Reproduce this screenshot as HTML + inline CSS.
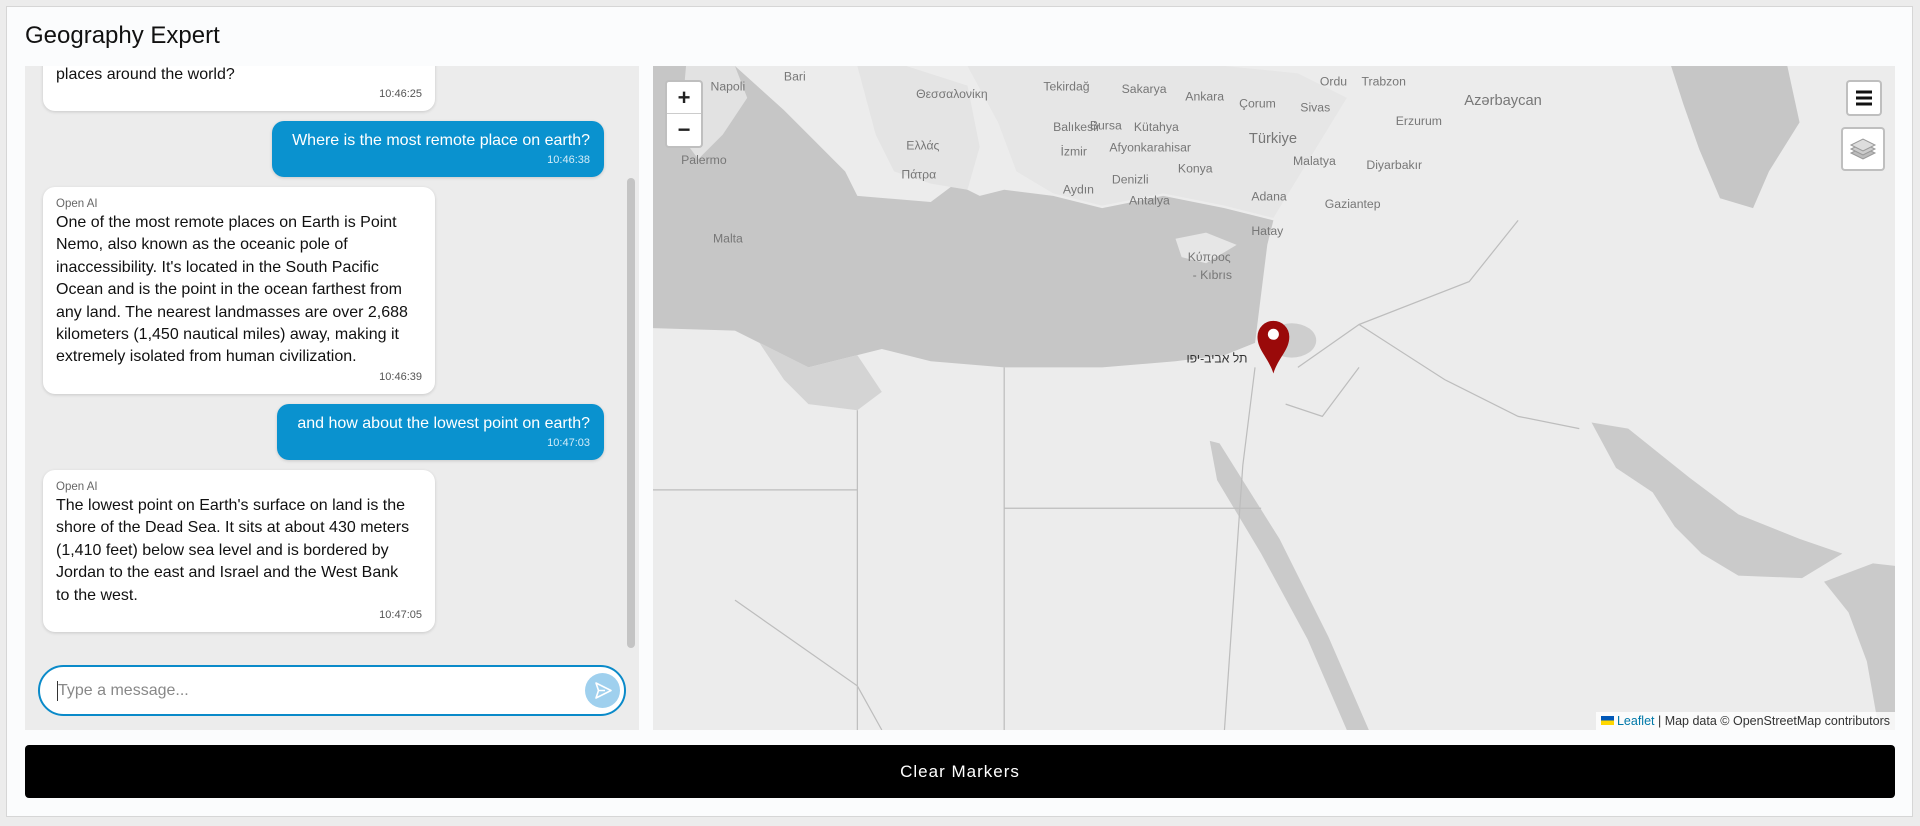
<!DOCTYPE html>
<html><head><meta charset="utf-8"><style>
*{box-sizing:border-box;margin:0;padding:0}
body{width:1920px;height:826px;background:#ececec;font-family:"Liberation Sans","Noto Sans CJK SC",sans-serif;position:relative;overflow:hidden}
.card{position:absolute;left:6px;top:6px;width:1907px;height:811px;background:#fbfcfd;border:1px solid #d6d6d6}
.title{position:absolute;left:25px;top:22px;font-size:24px;color:#111}
.chat{position:absolute;left:25px;top:66px;width:614px;height:664px;background:#ececec;overflow:hidden}
.b{position:absolute;border-radius:12px;padding:9px 13px;box-shadow:0 1px 3px rgba(0,0,0,.15)}
.ai{left:18px;width:392px;background:#fff;color:#111}
.us{right:35px;background:#0a92cf;color:#fff;text-align:right;padding:9px 14px}
.lb{font-size:11.5px;color:#666;line-height:16px}
.tx{font-size:16px;line-height:22.4px}
.ts{font-size:11px;line-height:16px;text-align:right;color:#555}
.us .ts{color:#d4ecf8}
.sb{position:absolute;left:602px;top:112px;width:8px;height:470px;background:#c4c4c4;border-radius:4px}
.inp{position:absolute;left:13px;top:599px;width:588px;height:51px;border:2px solid #0a8ac9;border-radius:26px;background:#fff}
.inp span{position:absolute;left:18px;top:15px;font-size:16px;color:#888}
.inp i{position:absolute;left:17px;top:14px;width:1px;height:20px;background:#333}
.send{position:absolute;right:4px;top:6px;width:35px;height:35px;border-radius:50%;background:#9fd0ee}
.map{position:absolute;left:653px;top:66px;width:1242px;height:664px;overflow:hidden;background:#ececec}
.ctl{position:absolute;background:#fff;border:2px solid rgba(0,0,0,.25);border-radius:4px}
.zb{width:34px;height:32px;text-align:center;font:bold 22px/32px "Liberation Sans",sans-serif;color:#222}
.attr{position:absolute;right:0;bottom:0;background:rgba(255,255,255,.8);font-size:12.5px;padding:2px 5px;color:#333}
.attr a{color:#0078a8;text-decoration:none}
.btn{position:absolute;left:25px;top:745px;width:1870px;height:53px;background:#000;border-radius:4px;color:#fff;font-size:17px;letter-spacing:1px;text-align:center;line-height:53px}
</style></head><body>
<div class="card"></div>
<div class="title">Geography Expert</div>
<div class="chat">
 <div class="b ai" style="top:-40px;padding-top:38px"><div class="tx">places around the world?</div><div class="ts">10:46:25</div></div>
 <div class="b us" style="top:55px;width:332px"><div class="tx">Where is the most remote place on earth?</div><div class="ts">10:46:38</div></div>
 <div class="b ai" style="top:121px"><div class="lb">Open AI</div><div class="tx">One of the most remote places on Earth is Point<br>Nemo, also known as the oceanic pole of<br>inaccessibility. It's located in the South Pacific<br>Ocean and is the point in the ocean farthest from<br>any land. The nearest landmasses are over 2,688<br>kilometers (1,450 nautical miles) away, making it<br>extremely isolated from human civilization.</div><div class="ts">10:46:39</div></div>
 <div class="b us" style="top:338px;width:327px"><div class="tx">and how about the lowest point on earth?</div><div class="ts">10:47:03</div></div>
 <div class="b ai" style="top:404px"><div class="lb">Open AI</div><div class="tx">The lowest point on Earth's surface on land is the<br>shore of the Dead Sea. It sits at about 430 meters<br>(1,410 feet) below sea level and is bordered by<br>Jordan to the east and Israel and the West Bank<br>to the west.</div><div class="ts">10:47:05</div></div>
 <div class="sb"></div>
 <div class="inp"><i></i><span>Type a message...</span><div class="send"><svg width="35" height="35" viewBox="0 0 35 35"><path d="M11 10 L26 17.5 L11 25 L13.5 17.5 Z M13.5 17.5 H20" fill="none" stroke="#fff" stroke-width="1.6" stroke-linejoin="round"/></svg></div></div>
</div>
<div class="map">
<svg width="1242" height="664" viewBox="533 54 1015 542" preserveAspectRatio="none" style="position:absolute;left:0;top:0">
 <rect x="533" y="54" width="1015" height="542" fill="#ececec"/>
 <path d="M533,54 L600,54 L640,90 L660,110 L690,140 L700,160 L760,165 L780,150 L800,160 L820,155 L860,160 L900,170 L950,160 L1000,170 L1040,180 L1035,200 L1030,240 L1025,280 L1000,290 L960,295 L900,300 L820,300 L760,295 L720,285 L700,290 L660,300 L620,280 L600,270 L533,268 Z" fill="#c6c6c6"/>
 <path d="M560,54 L600,54 L610,80 L590,110 L570,130 L555,110 Z" fill="#e2e2e2"/>
 <path d="M700,54 L740,54 L790,70 L800,120 L790,155 L760,150 L730,140 L715,110 Z" fill="#e4e4e4"/>
 <path d="M790,54 L1000,54 L1060,60 L1100,80 L1040,178 L1000,168 L950,158 L900,168 L860,158 L830,140 L815,100 Z" fill="#e6e6e6"/>
 <path d="M960,195 L985,190 L1010,200 L985,215 L965,210 Z" fill="#e6e6e6"/>
 <path d="M620,280 L660,300 L700,290 L720,320 L700,335 L660,330 L640,310 Z" fill="#d4d4d4"/>
 <path d="M1365,54 L1460,54 L1470,100 L1445,140 L1432,170 L1405,162 L1388,122 L1375,85 Z" fill="#c6c6c6"/>
 <path d="M988,360 L996,362 L1045,440 L1085,520 L1118,596 L1100,596 L1068,522 L1030,452 L994,392 Z" fill="#cacaca"/>
 <path d="M1300,345 L1330,350 L1380,390 L1420,420 L1470,440 L1505,452 L1472,472 L1420,470 L1390,452 L1368,430 L1350,402 L1320,382 Z" fill="#cacaca"/>
 <path d="M1490,475 L1530,460 L1548,462 L1548,596 L1535,596 L1525,540 L1510,500 Z" fill="#cacaca"/>
 <g fill="none" stroke="#bdbdbd" stroke-width="1">
  <path d="M820,300 L820,596 M700,335 L700,596 M820,415 L1030,415 M1025,300 L1015,380 L1000,596 M1060,300 L1110,265 L1180,310 L1240,340 L1290,350 M1110,265 L1200,230 L1240,180 M1050,330 L1080,340 L1110,300 M600,490 L700,560 L720,596 M533,400 L700,400"/>
 </g>
 <g font-size="10" fill="#777" font-family="Liberation Sans,sans-serif">
  <text x="580" y="74">Napoli</text><text x="640" y="66">Bari</text><text x="556" y="134">Palermo</text><text x="582" y="198">Malta</text>
  <text x="748" y="80">Θεσσαλονίκη</text><text x="740" y="122">Ελλάς</text><text x="736" y="146">Πάτρα</text>
  <text x="852" y="74">Tekirdağ</text><text x="916" y="76">Sakarya</text><text x="968" y="82">Ankara</text><text x="1012" y="88">Çorum</text>
  <text x="1062" y="91">Sivas</text><text x="1078" y="70">Ordu</text><text x="1112" y="70">Trabzon</text><text x="1140" y="102">Erzurum</text>
  <text x="1020" y="117" font-size="12">Türkiye</text><text x="1196" y="86" font-size="12">Azərbaycan</text>
  <text x="890" y="106">Bursa</text><text x="860" y="107">Balıkesir</text><text x="926" y="107">Kütahya</text><text x="866" y="127">İzmir</text>
  <text x="906" y="124">Afyonkarahisar</text><text x="962" y="141">Konya</text><text x="1056" y="135">Malatya</text><text x="1116" y="138">Diyarbakır</text>
  <text x="868" y="158">Aydın</text><text x="908" y="150">Denizli</text><text x="922" y="167">Antalya</text><text x="1022" y="164">Adana</text>
  <text x="1082" y="170">Gaziantep</text><text x="1022" y="192">Hatay</text><text x="970" y="213">Κύπρος</text><text x="974" y="228">- Kıbrıs</text>
 </g>
 <g fill="#333" font-family="Liberation Sans,sans-serif" font-size="10"><text x="969" y="296">תל אביב-יפו</text></g>
 <ellipse cx="1055" cy="278" rx="20" ry="14" fill="#999" opacity=".35"/>
 <path d="M1040,305 C1036,292 1027,286 1027,275 A13,13 0 0 1 1053,275 C1053,286 1044,292 1040,305 Z" fill="#9a0a0a"/>
 <circle cx="1040" cy="273" r="4.5" fill="#fff"/>
</svg>
<div class="ctl" style="left:12px;top:14px;width:38px"><div class="zb" style="border-bottom:1px solid #ccc">+</div><div class="zb">−</div></div>
<div class="ctl" style="left:1193px;top:14px;width:36px;height:36px"><svg width="32" height="32" viewBox="0 0 32 32"><path d="M8 10H24M8 16H24M8 22H24" stroke="#111" stroke-width="3"/></svg></div>
<div class="ctl" style="left:1188px;top:61px;width:44px;height:44px"><svg width="40" height="40" viewBox="0 0 40 40"><path d="M8 24 L20 30 L32 24 L20 18 Z" fill="#bbb" stroke="#999"/><path d="M8 20 L20 26 L32 20 L20 14 Z" fill="#ccc" stroke="#999"/><path d="M8 16 L20 22 L32 16 L20 10 Z" fill="#ddd" stroke="#999"/></svg></div>
<div class="attr"><span style="display:inline-block;width:13px;height:9px;background:linear-gradient(#0057b7 50%,#ffd700 50%);margin-right:3px"></span><a>Leaflet</a> | Map data © OpenStreetMap contributors</div>
</div>
<div class="btn">Clear Markers</div>
</body></html>
